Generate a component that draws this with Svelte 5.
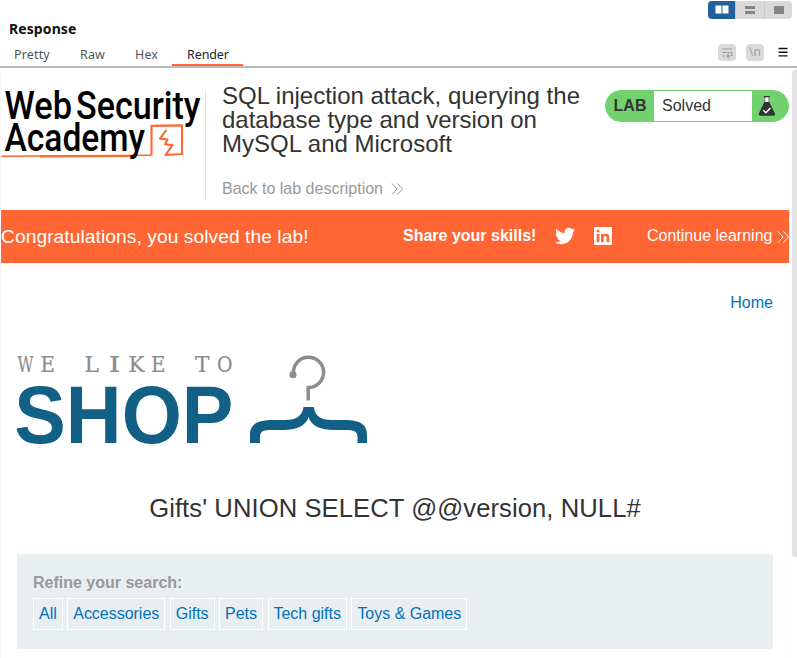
<script>
  const tabs = [
    { name: 'Pretty', width: 51 },
    { name: 'Raw', width: 41 },
    { name: 'Hex', width: 36 },
    { name: 'Render', width: 56 }
  ];
  const active = 'Render';
  const filters = ['All', 'Accessories', 'Gifts', 'Pets', 'Tech gifts', 'Toys & Games'];
  const tagline = [
    ['W', 17.5, 16], ['E', 40.5, 14.5], [' ', 60, 5],
    ['L', 84.5, 14.5], ['I', 108.5, 12], ['K', 128.5, 16], ['E', 151, 14.5], [' ', 170, 5],
    ['T', 195, 14.5], ['O', 217, 15.500]
  ];
</script>

<div class="app">
  <header class="panel">
    <div class="top">
      <h2>Response</h2>
      <div class="layouts">
        <span class="seg on"><svg width="27" height="18"><path d="M7.500 5.500h6v8h-6zM14.500 5.500h6v8h-6z" fill="#fff" /></svg></span>
        <span class="seg"><svg width="28" height="18"><path d="M9 6h10v3H9zM9 11h10v3H9z" fill="#858585" /></svg></span>
        <span class="seg"><svg width="27" height="18"><path d="M9 6h10v8H9z" fill="#858585" /></svg></span>
      </div>
    </div>
    <div class="bar">
      <nav>
        {#each tabs as t}
          <span class="tab" class:active={t.name === active} style:width="{t.width}px">{t.name}</span>
        {/each}
      </nav>
      <div class="tools">
        <span class="tool"><svg width="18" height="17" fill="none" stroke="#a0a0a0" stroke-width="1.200"><path d="M4 5h10M4 8.500h8.500a1.700 1.700 0 0 1 0 3.500H9M4 12h3M10.800 10L9 12l1.800 2" /></svg></span>
        <span class="tool nl">\n</span>
        <svg class="menu" width="10" height="17"><path d="M0.500 4.500h9M0.500 8.200h9M0.500 11.900h9" stroke="#111" stroke-width="1.400" /></svg>
      </div>
    </div>
  </header>

  <div class="viewport">
    <main>
      <section class="lab">
        <div class="logo">
          <svg width="205" height="90" viewBox="0 75 205 90">
            <g fill="none" stroke="#ff6633" stroke-linejoin="round">
              <path d="M1.500 156.300L151 155.200" stroke-width="1.600" />
              <path d="M40 156.500L130 156" stroke-width="2.200" />
              <path d="M151.500 155.500V125.900L182 125.400V154L165.500 155L172.500 145.200L165 144.200L167.500 139.500L160 138.700L166.300 130" stroke-width="2.100" />
            </g>
            <g class="brand">
              <text x="4.500" y="118.700" textLength="67.500" lengthAdjust="spacingAndGlyphs">Web</text>
              <text x="76" y="118.700" textLength="124.500" lengthAdjust="spacingAndGlyphs">Security</text>
              <text x="4.500" y="151" textLength="140.500" lengthAdjust="spacingAndGlyphs">Academy</text>
            </g>
          </svg>
        </div>
        <div class="title">
          <h1>SQL injection attack, querying the database type and version on MySQL and Microsoft</h1>
          <span class="back">Back to lab description
            <svg width="13" height="12" fill="none" stroke="#999"><path d="M1 .5l5 5.500-5 5.500M6.500 .5l5 5.500-5 5.500" /></svg>
          </span>
        </div>
        <div class="status">
          <b>LAB</b><span>Solved</span>
          <svg width="30" height="30" viewBox="0 0 30 30">
            <path d="M11.800 5.700h6" stroke="#333332" stroke-width="1.400" />
            <path d="M12.500 6.500h4.600v5h-4.600z" fill="#fff" />
            <path d="M12.800 6v5M16.800 6v5" stroke="#555" stroke-width=".7" />
            <path d="M12.300 11h5l5.700 11.500q.5 2.200-1.500 2.200H8.300q-2 0-1.500-2.200z" fill="#333332" />
            <path d="M11.300 19.300l2.600 2.500 4.500-4.700" fill="none" stroke="#fff" stroke-width="1.500" />
          </svg>
        </div>
      </section>

      <section class="banner">
        <span class="congrats">Congratulations, you solved the lab!</span>
        <b>Share your skills!</b>
        <svg class="tw" width="20" height="20" viewBox="0 0 24 24" fill="#fff"><path d="M23.950 4.570a10 10 0 0 1-2.820.770 4.960 4.960 0 0 0 2.160-2.720c-.950.550-2 .950-3.130 1.180a4.920 4.920 0 0 0-8.380 4.480C7.690 8.090 4.070 6.130 1.640 3.160a4.820 4.820 0 0 0-.670 2.480c0 1.710.870 3.210 2.190 4.100a4.900 4.900 0 0 1-2.230-.620v.060a4.920 4.920 0 0 0 3.950 4.830 5 5 0 0 1-2.210.080 4.940 4.940 0 0 0 4.600 3.420A9.870 9.870 0 0 1 0 19.540a13.990 13.990 0 0 0 7.550 2.210c9.050 0 14-7.500 14-13.980 0-.210 0-.420-.020-.630a9.940 9.940 0 0 0 2.460-2.550z" /></svg>
        <svg class="li" width="18" height="18" viewBox="0 0 18 18"><rect width="18" height="18" rx="1" fill="#fff" /><path d="M2.700 6.900h2.700v8.400H2.700zM7 6.900h2.500v1.200c.5-.9 1.500-1.400 2.600-1.400 2.500 0 3.200 1.500 3.200 3.900v4.700h-2.700v-4.200c0-1.300-.3-2.100-1.400-2.100-1.200 0-1.600.9-1.600 2.100v4.200H7z" fill="#f63" /><circle cx="4.050" cy="4.100" r="1.500" fill="#f63" /></svg>
        <span class="cont">Continue learning</span>
        <svg width="12" height="12" fill="none" stroke="#fff"><path d="M1 .5l5 5.500-5 5.500M6.500 .5l5 5.500-5 5.500" /></svg>
      </section>

      <section class="shop">
        <div class="home"><span>Home</span></div>
        <svg class="shoplogo" width="360" height="100" viewBox="17 350 360 100">
          <text class="like" y="371.700">{#each tagline as [c, x, w]}<tspan {x} textLength={w} lengthAdjust="spacingAndGlyphs">{c}</tspan>{/each}</text>
          <text class="big" x="14.300" y="443" textLength="219" lengthAdjust="spacingAndGlyphs">SHOP</text>
          <circle cx="293" cy="374.700" r="3.600" fill="#8c8d8e" />
          <path d="M293.500 374A15.100 15.100 0 1 1 308.200 387.500V400.500" fill="none" stroke="#8c8d8e" stroke-width="3.500" />
          <path d="M303.500 407h10.300C315 417 322 420 332 420H344C361 420 367 425 367 435V443H357.500V437C357.500 431 354 430 345 430H334C321 430 311 426 308.600 417C306 426 296 430 283 430H272C263 430 260 431 260 437V443H250V435C250 425 256 420 273 420H285C295 420 302 417 303.500 407Z" fill="#126085" />
        </svg>
        <h1 class="query">Gifts' UNION SELECT @@version, NULL#</h1>
        <div class="search">
          <b>Refine your search:</b>
          <div class="filters">
            {#each filters as f}<span>{f}</span>{/each}
          </div>
        </div>
      </section>
    </main>
    <div class="scroll"><i></i></div>
  </div>
</div>

<style>
  :global(body) { margin: 0; background: #fff; overflow: hidden; }
  .app { width: 797px; height: 658px; overflow: hidden; display: flex; flex-direction: column; font: 16px "Liberation Sans", Arial, sans-serif; color: #333332; }
  svg { display: block; flex: none; overflow: visible; }
  h1, h2 { margin: 0; font-weight: 400; }
  .panel { height: 66px; border-bottom: 2px solid #b7bcba; font-family: "Noto Sans", sans-serif; flex: none; }
  .top { display: flex; justify-content: space-between; height: 42px; padding: 0 5px 0 9px; }
  h2 { font-weight: 700; font-size: 14px; line-height: 20px; padding-top: 19px; color: #111; letter-spacing: .1px; }
  .layouts { display: flex; margin-top: 1px; height: 18px; border-radius: 4px; overflow: hidden; background: #d9d9d9; }
  .layouts svg { margin-top: -1px; }
  .seg + .seg { border-left: 1px solid #c8c8c8; box-sizing: border-box; }
  .on { background: #24619c; }
  .bar { display: flex; justify-content: space-between; height: 24px; }
  nav { display: flex; }
  .tab { box-sizing: content-box; font-size: 12.500px; letter-spacing: .15px; line-height: 26px; height: 22px; padding-left: 14px; color: #555; white-space: nowrap; }
  .tab:nth-child(2) { padding-left: 15px; }
  .tab:nth-child(3) { padding-left: 14px; }
  .tab.active { color: #222; border-bottom: 2px solid #f63; padding-left: 15px; letter-spacing: -.1px; margin-left: 1px; }
  .tools { display: flex; padding: 2px 9px 0 0; gap: 10px; }
  .tool { width: 18px; height: 17px; border-radius: 4px; background: #dadada; }
  .nl { color: #a0a0a0; font-size: 12px; line-height: 16px; text-align: center; }
  .menu { margin-left: 4px; }
  .viewport { flex: 1; display: flex; min-height: 0; }
  main { width: 788px; border-left: 1px solid #f7f7f7; border-right: 1px solid #f9f9f9; }
  .lab { display: flex; height: 142px; }
  .logo { width: 204px; height: 110px; margin-top: 22px; border-right: 1px solid #e0e0e0; }
  .logo svg { margin: -15px 0 0 -1px; }
  .brand { font: 500 38px Roboto, sans-serif; fill: #000; }
  .title { width: 365px; padding: 16px 0 0 16px; }
  .title h1 { font-size: 24px; line-height: 24px; }
  .back { display: flex; gap: 8px; align-items: center; color: #999; margin-top: 24px; line-height: 18px; }
  .status { display: flex; box-sizing: border-box; width: 184px; height: 32px; margin: 22px 0 0 18px; border: 1px solid #71d16f; border-radius: 16px; background: #71d16f; line-height: 30px; overflow: hidden; }
  .status b { width: 48px; text-align: center; }
  .status span { width: 90px; padding-left: 8px; background: #fff; }
  .banner { display: flex; align-items: center; height: 53px; background: #f63; color: #fff; overflow: hidden; }
  .congrats { width: 402px; font-size: 19.200px; letter-spacing: .07px; white-space: nowrap; }
  .banner b { width: 152px; margin-top: -2px; white-space: nowrap; }
  .tw, .li { margin-top: -1px; }
  .li { margin-right: 35px; margin-left: 19px; }
  .cont { width: 130px; margin-top: -2px; white-space: nowrap; }
  .shop { padding: 0 16px; }
  .home { text-align: right; color: #0071bc; padding-top: 30px; line-height: 20px; }
  .shoplogo { margin-top: 37px; }
  .like { font: 21.500px "DejaVu Serif", serif; fill: #8c8d8e; stroke: #8c8d8e; stroke-width: .2px; }
  .big { font: 700 81.500px "Liberation Sans", Arial, sans-serif; fill: #126085; }
  .query { font-size: 25.600px; letter-spacing: .08px; line-height: 30px; text-align: center; margin-top: 43px; }
  .search { height: 95px; box-sizing: border-box; margin-top: 31px; padding: 19px 16px 0; background: #e9eef1; }
  .search b { color: #999; line-height: 20px; display: block; }
  .filters { display: flex; gap: 4.500px; margin-top: 5px; color: #0071bc; }
  .filters span { border: 1px solid #fff; padding: 0 5px; height: 30px; line-height: 30px; letter-spacing: -.02px; }
  .scroll { flex: 1; padding: 2px 0 0 2px; }
  .scroll i { display: block; height: 487px; background: #e3e3e3; border-radius: 4px 0 0 4px; }
</style>
